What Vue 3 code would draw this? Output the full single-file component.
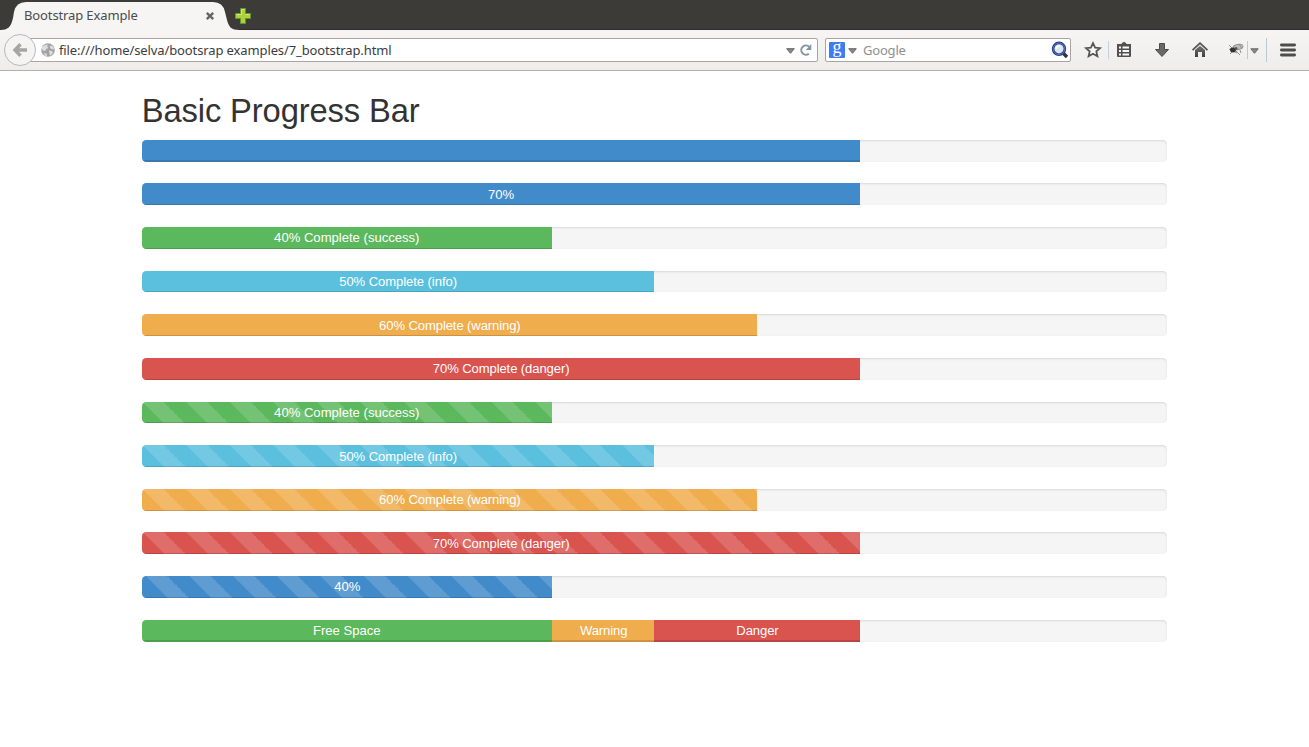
<script setup>
const rows = [
  [{ w: 70, c: 'primary deep', t: '' }],
  [{ w: 70, c: 'primary', t: '70%' }],
  [{ w: 40, c: 'success', t: '40% Complete (success)' }],
  [{ w: 50, c: 'info', t: '50% Complete (info)' }],
  [{ w: 60, c: 'warning', t: '60% Complete (warning)' }],
  [{ w: 70, c: 'danger', t: '70% Complete (danger)' }],
  [{ w: 40, c: 'success striped', t: '40% Complete (success)' }],
  [{ w: 50, c: 'info striped', t: '50% Complete (info)' }],
  [{ w: 60, c: 'warning striped', t: '60% Complete (warning)' }],
  [{ w: 70, c: 'danger striped', t: '70% Complete (danger)' }],
  [{ w: 40, c: 'primary striped active', t: '40%' }],
  [
    { w: 40, c: 'success deep', t: 'Free Space' },
    { w: 10, c: 'warning deep', t: 'Warning' },
    { w: 20, c: 'danger deep', t: 'Danger' },
  ],
]
</script>

<template>
  <div class="window">
    <header class="tabs">
      <div class="tab">
        <svg class="tab-shape" width="240" height="30" viewBox="0 0 240 30">
          <path d="M0 30C8 30 11 27 13 18L14 12Q16 2 26 2H213Q223 2 225 12L227 20C229 27 231 30 240 30Z" fill="#f6f5f4" />
        </svg>
        <span class="tab-title">Bootstrap Example</span>
        <svg class="tab-close" width="10" height="10" viewBox="0 0 10 10"><path d="M1.8 1.8L8.2 8.2M8.2 1.8L1.8 8.2" stroke="#666" stroke-width="2.4" /></svg>
      </div>
      <svg class="new-tab" width="18" height="18" viewBox="0 0 18 18">
        <path d="M6.5 1.5H11.5V6.5H16.5V11.5H11.5V16.5H6.5V11.5H1.5V6.5H6.5Z" fill="#b0d136" stroke="#64913a" />
        <path d="M7.5 8V2.5H10.5M2.5 7.5H7.5M11.5 7.5H15.5" fill="none" stroke="#d3e77b" />
      </svg>
    </header>
    <div class="toolbar">
      <div class="urlbar">
        <svg width="14" height="14" viewBox="0 0 14 14">
          <circle cx="7" cy="7" r="6.8" fill="#a3a3a3" />
          <path d="M1 4L4 2L7 1.5L6 3.5L7.5 5L5 6L4.5 8L2 7.5L.8 6ZM8.5 3.5L11 2.5L13 5L12.5 6.5L10 6ZM8 7.5L11 8L12 10L9 12.8L8.4 10ZM3 10L5.5 10.5L6 13L4 12.4Z" fill="#dedede" />
        </svg>
        <span class="url">file:///home/selva/bootsrap examples/7_bootstrap.html</span>
        <svg class="arrow" width="9" height="6" viewBox="0 0 9 6"><path d="M.7.7H8.3L4.5 5.3Z" fill="#888" stroke="#666" /></svg>
        <svg class="reload" width="14" height="14" viewBox="0 0 14 14">
          <path d="M9.8 10.7A4.6 4.6 0 1 1 10.2 4" fill="none" stroke="#8795a1" stroke-width="2" />
          <path d="M12.3 1V7H6.8Z" fill="#8795a1" />
        </svg>
      </div>
      <div class="back">
        <svg width="18" height="18" viewBox="0 0 18 18"><path d="M9.5 3.3L4 9L9.5 14.7M4 9H16" fill="none" stroke="#a5a5a5" stroke-width="3.4" /></svg>
      </div>
      <div class="search">
        <span class="g-logo">g</span>
        <svg class="g-arrow" width="9" height="6" viewBox="0 0 9 6"><path d="M.7.7H8.3L4.5 5.3Z" fill="#888" stroke="#666" /></svg>
        <span class="placeholder">Google</span>
        <svg class="magnifier" width="18" height="18" viewBox="0 0 18 18">
          <path d="M11.5 11.5L16 16" stroke="#333" stroke-width="3.4" />
          <circle cx="8" cy="7.8" r="5.9" fill="#dce5f1" stroke="#263b86" stroke-width="2.6" />
          <circle cx="8" cy="7.8" r="5.8" fill="none" stroke="#6680c2" stroke-width=".8" />
          <path d="M5 8A3.2 3.2 0 0 1 9 5" fill="none" stroke="#fff" stroke-width="1.5" />
        </svg>
      </div>
      <div class="actions">
        <svg width="216" height="32" viewBox="0 0 216 32">
          <defs>
            <linearGradient id="metal" x1="0" y1="0" x2="0" y2="1"><stop stop-color="#777" /><stop offset="1" stop-color="#3e3e3e" /></linearGradient>
          </defs>
          <path d="M15 9.2L17.1 13.6L22 14.1L18.3 17.4L19.4 22.2L15 19.7L10.6 22.2L11.7 17.4L8 14.1L12.9 13.6Z" fill="#fafafa" stroke="#555" stroke-width="1.8" />
          <path d="M30.5 7V25" stroke="#c5d0dc" />
          <path d="M39 10H53V22Q53 23 52 23H40Q39 23 39 22Z" fill="#505050" />
          <path d="M43 11L44 9L46 7.7L48 9L49 11Z" fill="#505050" />
          <path d="M41 13.5H43M44.5 13.5H51M41 17H43M44.5 17H51M41 20.5H43M44.5 20.5H51" stroke="#f7f7f7" stroke-width="1.8" />
          <path d="M81.5 9.5H86.5V15.5H90.5L84 22.5L77.5 15.5H81.5Z" fill="#686868" stroke="#4b4b4b" />
          <path d="M114.5 16.2L122 9.2L129.5 16.2" fill="none" stroke="#505050" stroke-width="1.6" />
          <path d="M117 16L122 11.7L127 16V23H124V18H120V23H117Z" fill="url(#metal)" />
          <g fill="none" stroke="#919191">
            <ellipse cx="160" cy="13" rx="5" ry="2.6" transform="rotate(-12 160 13)" fill="#bebebe" />
            <path d="M151 11L155 15M151 15L159 19M158 17L162 21M162 16L163 19M152 20L157 15M161 10L164 15" />
          </g>
          <ellipse cx="155" cy="16" rx="3" ry="2.4" fill="#333" /><circle cx="158" cy="14.5" r="1.6" fill="#555" />
          <path d="M169.5 7V25" stroke="#c4c8cc" />
          <path d="M172.8 14.8H180.2L176.5 19.3Z" fill="#888" stroke="#666" />
          <path d="M188.5 4V28" stroke="#bccad8" />
        </svg>
        <svg class="menu" width="18" height="14" viewBox="0 0 18 14"><path d="M2.4 2H15.6M2.4 7H15.6M2.4 12H15.6" stroke="#4c4c4c" stroke-width="2.8" stroke-linecap="round" /></svg>
      </div>
    </div>
    <main class="page">
      <h2>Basic Progress Bar</h2>
      <div v-for="(row, i) in rows" :key="i" class="progress">
        <div v-for="(b, j) in row" :key="j" class="bar" :class="b.c" :style="{ width: b.w + '%' }">{{ b.t }}</div>
      </div>
    </main>
  </div>
</template>

<style>
html, body { margin: 0; background: #fff; overflow: hidden; }
</style>

<style scoped>
* { box-sizing: border-box; }
.window { height: 747px; overflow: hidden; background: #fff; font-family: "Noto Sans", sans-serif; }
svg { display: block; flex: none; }
.tabs { height: 30px; display: flex; background: #3c3b37; box-shadow: inset 0 -1px #302f2c; }
.tab { position: relative; width: 234px; height: 30px; }
.tab-shape { position: absolute; left: 0; top: 0; }
.tab-title { position: absolute; left: 24px; top: 7px; font-size: 13px; line-height: 17px; color: #4c4c4c; letter-spacing: -.12px; white-space: nowrap; }
.tab-close { position: absolute; left: 205px; top: 11px; }
.new-tab { margin-top: 7px; }
.toolbar { position: relative; height: 41px; display: flex; align-items: center; background: linear-gradient(#f6f5f4, #eeedeb); border-bottom: 1px solid #b4afa9; }
.urlbar { margin-left: 26px; width: 792px; height: 24px; display: flex; align-items: center; padding-left: 14px; border: 1px solid #aaa5a0; border-radius: 2px; background: #fff; }
.url { margin-left: 4px; font-size: 13px; line-height: 20px; color: #3c3c3c; letter-spacing: -.115px; white-space: nowrap; }
.arrow { margin-left: auto; margin-right: 4px; margin-top: 2px; }
.reload { margin-right: 4px; }
.back { position: absolute; left: 4px; top: 4px; width: 32px; height: 32px; border: 1px solid #b3bac1; border-radius: 50%; background: #f5f4f3; display: grid; place-items: center; }
.search { margin-left: 7px; width: 246px; height: 24px; display: flex; align-items: center; padding: 0 1px 0 3px; border: 1px solid #aaa5a0; border-radius: 2px; background: #fff; }
.g-logo { width: 16px; height: 16px; background: #3f7cf4; border-radius: 1px; color: #fff; font: 18px/11px "Liberation Serif", serif; text-align: center; }
.g-arrow { margin-left: 3px; margin-top: 2px; }
.placeholder { margin-left: 6px; font-size: 13px; letter-spacing: -.2px; color: #8f8f8f; }
.magnifier { margin-left: auto; }
.actions { margin-left: 7px; display: flex; align-items: center; }
.menu { margin-left: -15px; }
.page { width: 1025.45px; margin-left: 141.72px; font-family: "Liberation Sans", Arial, sans-serif; }
h2 { margin: 0; padding-top: 21.8px; height: 68.8px; font-size: 32.73px; font-weight: 400; line-height: 36px; letter-spacing: -.12px; color: #333; }
.progress { height: 21.82px; margin-bottom: 21.82px; border-radius: 4.36px; overflow: hidden; background: #f5f5f5; box-shadow: inset 0 1.09px 2.18px rgba(0, 0, 0, .12); }
.progress:last-child { height: 22.2px; }
.bar { float: left; height: 100%; padding-top: .33px; color: #fff; font-size: 13.09px; line-height: 21.82px; text-align: center; box-shadow: inset 0 -1.09px 0 rgba(0, 0, 0, .15); }
.deep { box-shadow: inset 0 -2px 0 rgba(0, 0, 0, .15); }
.primary { background-color: #428bca; padding-left: 1px; }
.success { background-color: #5cb85c; }
.info { background-color: #5bc0de; letter-spacing: -.08px; }
.warning { background-color: #f0ad4e; letter-spacing: -.11px; padding-left: 1px; }
.danger { background-color: #d9534f; letter-spacing: -.11px; padding-left: 1px; }
.striped { background-image: linear-gradient(45deg, rgba(255, 255, 255, .15) 25%, transparent 25%, transparent 50%, rgba(255, 255, 255, .15) 50%, rgba(255, 255, 255, .15) 75%, transparent 75%, transparent); background-size: 43.636px 43.636px; }
.active { background-position: 3.4px 0; }
</style>
